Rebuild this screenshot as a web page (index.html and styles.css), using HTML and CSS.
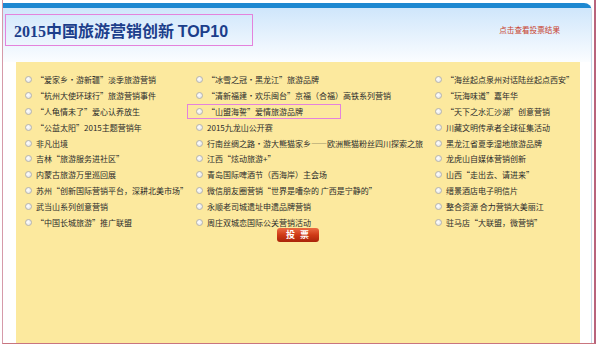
FILE: index.html
```html
<!DOCTYPE html>
<html lang="zh-CN">
<head>
<meta charset="UTF-8">
<title>2015中国旅游营销创新 TOP10</title>
<link rel="stylesheet" href="styles.css">
</head>
<body>

<div class="frame">
  <div class="panel">
    <div class="panel-head">
      <h1 class="title"><span class="num">2015</span>中国旅游营销创新 <span class="en">TOP10</span></h1>
      <a class="result-link" href="#">点击查看投票结果</a>
    </div>
    <form class="vote-box">
      <div class="vote-grid">
        <label class="item"><input type="radio" name="v">“爱家乡·游新疆”淡季旅游营销</label>
        <label class="item"><input type="radio" name="v">“冰雪之冠·黑龙江”旅游品牌</label>
        <label class="item"><input type="radio" name="v">“海丝起点泉州对话陆丝起点西安”</label>

        <label class="item"><input type="radio" name="v">“杭州大使环球行”旅游营销事件</label>
        <label class="item"><input type="radio" name="v">“清新福建·欢乐闽台”京福（合福）高铁系列营销</label>
        <label class="item"><input type="radio" name="v">“玩海味道”嘉年华</label>

        <label class="item"><input type="radio" name="v">“人龟情未了”爱心认养放生</label>
        <label class="item marked"><input type="radio" name="v">“山盟海誓”爱情旅游品牌</label>
        <label class="item"><input type="radio" name="v">“天下之水汇沙湖”创意营销</label>

        <label class="item"><input type="radio" name="v">“公益太阳”2015主题营销年</label>
        <label class="item"><input type="radio" name="v">2015九龙山公开赛</label>
        <label class="item"><input type="radio" name="v">川藏文明传承者全球征集活动</label>

        <label class="item"><input type="radio" name="v">非凡出境</label>
        <label class="item"><input type="radio" name="v">行南丝绸之路·游大熊猫家乡——欧洲熊猫粉丝四川探索之旅</label>
        <label class="item"><input type="radio" name="v">黑龙江省夏季湿地旅游品牌</label>

        <label class="item"><input type="radio" name="v">吉林“旅游服务进社区”</label>
        <label class="item"><input type="radio" name="v">江西“炫动旅游+”</label>
        <label class="item"><input type="radio" name="v">龙虎山自媒体营销创新</label>

        <label class="item"><input type="radio" name="v">内蒙古旅游万里巡回展</label>
        <label class="item"><input type="radio" name="v">青岛国际啤酒节（西海岸）主会场</label>
        <label class="item"><input type="radio" name="v">山西“走出去、请进来”</label>

        <label class="item"><input type="radio" name="v">苏州“创新国际营销平台，深耕北美市场”</label>
        <label class="item"><input type="radio" name="v">微信朋友圈营销“世界是嘈杂的 广西是宁静的”</label>
        <label class="item"><input type="radio" name="v">缙景酒店电子明信片</label>

        <label class="item"><input type="radio" name="v">武当山系列创意营销</label>
        <label class="item"><input type="radio" name="v">永顺老司城遗址申遗品牌营销</label>
        <label class="item"><input type="radio" name="v">整合资源 合力营销大美丽江</label>

        <label class="item"><input type="radio" name="v">“中国长城旅游”推广联盟</label>
        <label class="item"><input type="radio" name="v">周庄双城恋国际公关营销活动</label>
        <label class="item"><input type="radio" name="v">驻马店“大联盟，微营销”</label>
      </div>
      <div class="actions">
        <button type="button" class="vote-btn">投票</button>
      </div>
    </form>
  </div>
</div>

</body>
</html>
```

FILE: styles.css
```css
body, html {
  margin: 0;
  padding: 0;
  background: #fff;
  font-family: "Noto Sans CJK SC", sans-serif;
  color: #333;
}
.frame {
  margin-left: 2px;
  width: 591px;
  height: 343px;
  border-left: 1px solid #d69aa9;
  border-right: 2px solid #b8647c; /* 外框 */
  border-bottom: 1px solid #c9757f;
  display: flex;
  flex-direction: column;
}
.panel {
  margin-top: 3px;
  margin-right: 2px;
  flex: 1;
  display: flex;
  flex-direction: column;
  border-top: 5px solid #1d88d1; /* 蓝色顶条 */
  border-right: 1px solid #c9dceb;
  border-top-right-radius: 8px;
}
.panel-head {
  height: 54px;
  display: flex;
  align-items: flex-start;
  justify-content: space-between;
  background: linear-gradient(#cfe6fb, #eef6fe 70%, #fbfdff);
}
.title {
  margin: 6px 0 0 2px;
  width: 238px;
  height: 30px;
  padding-left: 8px;
  border: 1px solid #e482dc;
  font-size: 16px;
  font-weight: bold;
  line-height: 30px;
  color: #1c3e8b;
  white-space: nowrap;
}
.title .num {
  font-family: "Liberation Serif", serif;
}
.title .en {
  font-family: "Liberation Sans", sans-serif;
}
.result-link {
  margin: 16px 31px 0 0;
  font-size: 7.6px;
  line-height: 12px;
  color: #c8412c;
  text-decoration: none;
}
.vote-box {
  margin: 0 11px 0 13px;
  flex: 1;
  background-color: #fce99e;
  padding: 10px 0 0 9px;
}
.vote-grid {
  display: grid;
  grid-template-columns: 171px 239px 1fr;
  grid-auto-rows: 15.8px;
}
.item {
  position: relative;
  display: flex;
  align-items: center;
  font-size: 8px;
  color: #2b2b2b;
  white-space: nowrap;
}
.item input {
  appearance: none;
  margin: 0 4px 0 0;
  width: 7px;
  height: 7px;
  border-radius: 50%;
  border: 1px solid #b4b4b4;
  background: radial-gradient(circle at 40% 40%, #fff, #dedede);
  box-sizing: border-box;
  flex: none;
}
.item.marked::after {
  content: "";
  position: absolute;
  left: -9px;
  top: 0;
  width: 154px;
  height: 15px;
  border: 1px solid #e482dc;
  box-sizing: border-box;
}
.actions {
  display: flex;
  justify-content: center;
  margin-top: -2px;
  padding-right: 9px;
}
.vote-btn {
  width: 42px;
  height: 14px;
  padding: 0 0 0 4px;
  border: none;
  border-radius: 3px;
  background: linear-gradient(#ec6b42, #cf3a16 50%, #a92409);
  color: #fff;
  font-family: "Noto Sans CJK SC", sans-serif;
  font-size: 9px;
  font-weight: bold;
  letter-spacing: 5px;
  line-height: 14px;
}
```
